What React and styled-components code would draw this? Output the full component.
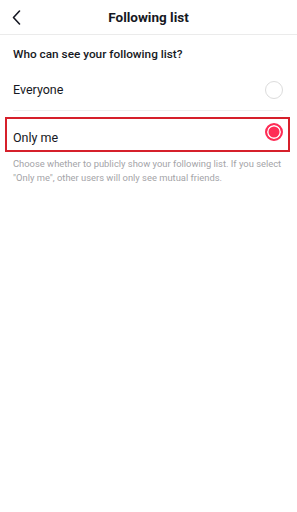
import React from "react";
import styled, { createGlobalStyle } from "styled-components";

const GlobalStyle = createGlobalStyle`
  body {
    margin: 0;
    background: #fff;
    font-family: Roboto, "Liberation Sans", sans-serif;
    color: #161823;
  }
`;

const Page = styled.div`
  width: 297px;
  min-height: 512px;
  background: #fff;
`;

const Header = styled.div`
  height: 34px;
  display: grid;
  grid-template-columns: 40px 1fr 40px;
  align-items: center;
  border-bottom: 1px solid #ebebeb;
`;

const BackButton = styled.button`
  border: none;
  background: none;
  padding: 0 0 0 12px;
  height: 34px;
  display: flex;
  align-items: center;
  cursor: pointer;
`;

const Title = styled.h1`
  margin: 0;
  text-align: center;
  font-size: 13.5px;
  font-weight: 700;
`;

const Section = styled.div`
  padding: 0 14px 0 13px;
`;

const SectionTitle = styled.h2`
  margin: 0;
  padding: 11px 0 0;
  height: 24px;
  font-size: 11.8px;
  font-weight: 500;
  line-height: 16px;
`;

const Option = styled.div`
  display: flex;
  justify-content: space-between;
  align-items: center;
  height: ${(p) => (p.$highlight ? "31px" : "40px")};
  margin: ${(p) => (p.$highlight ? "6px -7px 0 -8px" : "0")};
  padding: ${(p) => (p.$highlight ? "0 5px 0 6px" : "0")};
  border: ${(p) => (p.$highlight ? "2px solid #d6202b" : "none")};
  border-bottom: ${(p) => (p.$highlight ? "2px solid #d6202b" : "1px solid #efefef")};
`;

const Label = styled.span`
  font-size: 12.5px;
  line-height: 16px;
  padding-top: ${(p) => (p.$drop ? "7px" : "0")};
`;

const Radio = styled.span`
  box-sizing: border-box;
  width: 18px;
  height: 18px;
  border-radius: 50%;
  margin-top: ${(p) => (p.$lift ? "-5px" : "0")};
  border: ${(p) => (p.$checked ? "2px solid #fe2c55" : "1px solid #dcdcdc")};
  background: ${(p) => (p.$checked ? "#fe2c55" : "#fff")};
  box-shadow: ${(p) => (p.$checked ? "inset 0 0 0 1.5px #fff" : "none")};
`;

const Note = styled.p`
  margin: 0;
  padding: 5px 13px 0;
  font-size: 9.4px;
  line-height: 14px;
  color: #a4a4a8;
`;

const Chevron = () => (
  <svg width="9" height="15" viewBox="0 0 9 15" fill="none">
    <path d="M7.5 1 L1.5 7.5 L7.5 14" stroke="#161823" strokeWidth="1.6" strokeLinecap="round" strokeLinejoin="round" />
  </svg>
);

export default function App() {
  return (
    <Page>
      <GlobalStyle />
      <Header>
        <BackButton>
          <Chevron />
        </BackButton>
        <Title>Following list</Title>
        <span />
      </Header>
      <Section>
        <SectionTitle>Who can see your following list?</SectionTitle>
        <Option>
          <Label>Everyone</Label>
          <Radio />
        </Option>
        <Option $highlight>
          <Label $drop>Only me</Label>
          <Radio $checked $lift />
        </Option>
      </Section>
      <Note>
        Choose whether to publicly show your following list. If you select
        "Only me", other users will only see mutual friends.
      </Note>
    </Page>
  );
}
